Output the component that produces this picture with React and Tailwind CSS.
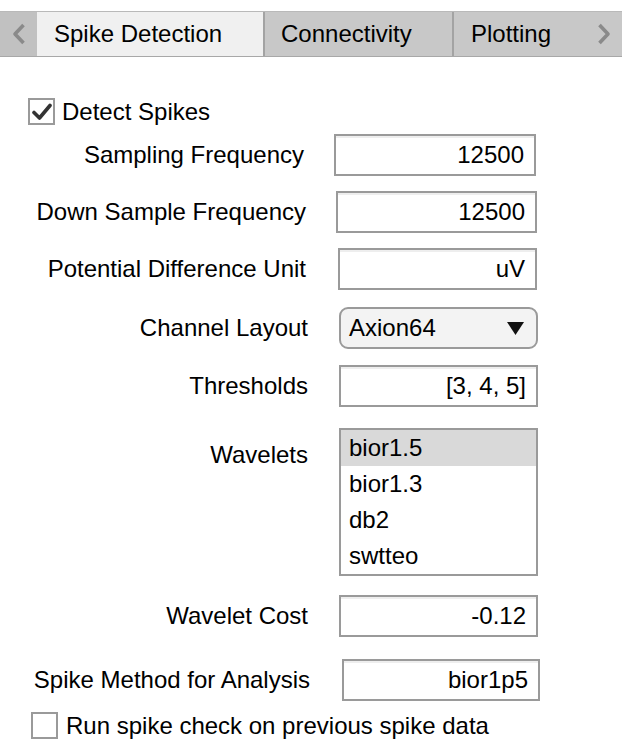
import React from 'react';

function Chevron({ dir }) {
  return (
    <svg width="16" height="24" viewBox="0 0 16 24" fill="none">
      {dir === 'left' ? (
        <path d="M12.5 3 L4 12 L12.5 21" stroke="#8a8a8a" strokeWidth="3.6" strokeLinejoin="round" />
      ) : (
        <path d="M3.5 3 L12 12 L3.5 21" stroke="#8a8a8a" strokeWidth="3.6" strokeLinejoin="round" />
      )}
    </svg>
  );
}

function Box({ checked, cls }) {
  return (
    <div className={`w-[27px] h-[27px] border-2 border-[#9a9a9a] bg-white flex items-center justify-center shrink-0 ${cls}`}>
      {checked && (
        <svg width="20" height="18" viewBox="0 0 20 18">
          <path d="M2 9.5 L7.5 15 L18 2.5" stroke="#333" strokeWidth="3.6" fill="none" strokeLinecap="round" strokeLinejoin="round" />
        </svg>
      )}
    </div>
  );
}

function Field({ label, value, labelCls, boxCls, rowCls }) {
  return (
    <div className={`flex items-center ${rowCls}`}>
      <div className={`text-right shrink-0 ${labelCls}`}>{label}</div>
      <div className={`h-[42px] border-2 border-[#9a9a9a] bg-white flex items-center justify-end pr-[10px] shadow-[inset_0_2px_0_#eeeeee] ${boxCls}`}>
        {value}
      </div>
    </div>
  );
}

export default function App() {
  return (
    <div className="w-[622px] h-[755px] bg-white text-black text-[24px] leading-none overflow-hidden font-['Liberation_Sans',Arial,sans-serif]">
      <div className="pt-[11px]">
        <div className="flex h-[46px] bg-[#c8c8c8] border-t border-[#b9b9b9] border-b border-b-[#a8a8a8]">
          <div className="w-[37px] bg-[#c1c1c1] flex items-center justify-center">
            <Chevron dir="left" />
          </div>
          <div className="w-[226px] bg-[#f0f0f0] flex items-center pl-[17px]">Spike Detection</div>
          <div className="w-[189px] border-l-2 border-[#a3a3a3] flex items-center pl-[16px]">Connectivity</div>
          <div className="flex-1 border-l-2 border-[#a3a3a3] flex items-center pl-[17px]">Plotting</div>
          <div className="w-[37px] flex items-center justify-center">
            <Chevron dir="right" />
          </div>
        </div>
      </div>

      <div className="flex flex-col">
        <div className="flex items-center mt-[41px] ml-[28px]">
          <Box checked />
          <span className="ml-[7px]">Detect Spikes</span>
        </div>

        <Field rowCls="mt-[9px]" label="Sampling Frequency" value="12500" labelCls="w-[304px]" boxCls="ml-[30px] w-[202px]" />
        <Field rowCls="mt-[15px]" label="Down Sample Frequency" value="12500" labelCls="w-[306px]" boxCls="ml-[30px] w-[201px]" />
        <Field rowCls="mt-[15px]" label="Potential Difference Unit" value="uV" labelCls="w-[306px]" boxCls="ml-[32px] w-[199px]" />

        <div className="flex items-center mt-[17px]">
          <div className="w-[308px] text-right shrink-0">Channel Layout</div>
          <div className="ml-[31px] w-[199px] h-[42px] border-2 border-[#9a9a9a] rounded-[9px] bg-[#f3f3f3] flex items-center justify-between pl-[8px] pr-[12px]">
            <span>Axion64</span>
            <svg width="17" height="13" viewBox="0 0 17 13">
              <path d="M0 0 H17 L8.5 13 Z" fill="#111" />
            </svg>
          </div>
        </div>

        <Field rowCls="mt-[16px]" label="Thresholds" value="[3, 4, 5]" labelCls="w-[308px]" boxCls="ml-[31px] w-[199px]" />

        <div className="flex items-start mt-[21px]">
          <div className="w-[308px] text-right shrink-0 mt-[15px]">Wavelets</div>
          <div className="ml-[31px] w-[199px] h-[148px] border-2 border-[#9a9a9a] bg-white flex flex-col">
            <div className="h-[36px] bg-[#d9d9d9] flex items-center pl-[8px]">bior1.5</div>
            <div className="h-[36px] flex items-center pl-[8px]">bior1.3</div>
            <div className="h-[36px] flex items-center pl-[8px]">db2</div>
            <div className="h-[36px] flex items-center pl-[8px]">swtteo</div>
          </div>
        </div>

        <Field rowCls="mt-[19px]" label="Wavelet Cost" value="-0.12" labelCls="w-[308px]" boxCls="ml-[31px] w-[199px]" />
        <Field rowCls="mt-[22px]" label="Spike Method for Analysis" value="bior1p5" labelCls="w-[310px]" boxCls="ml-[32px] w-[198px]" />

        <div className="flex items-center mt-[11px] ml-[31px]">
          <Box />
          <span className="ml-[8px]">Run spike check on previous spike data</span>
        </div>
      </div>
    </div>
  );
}
